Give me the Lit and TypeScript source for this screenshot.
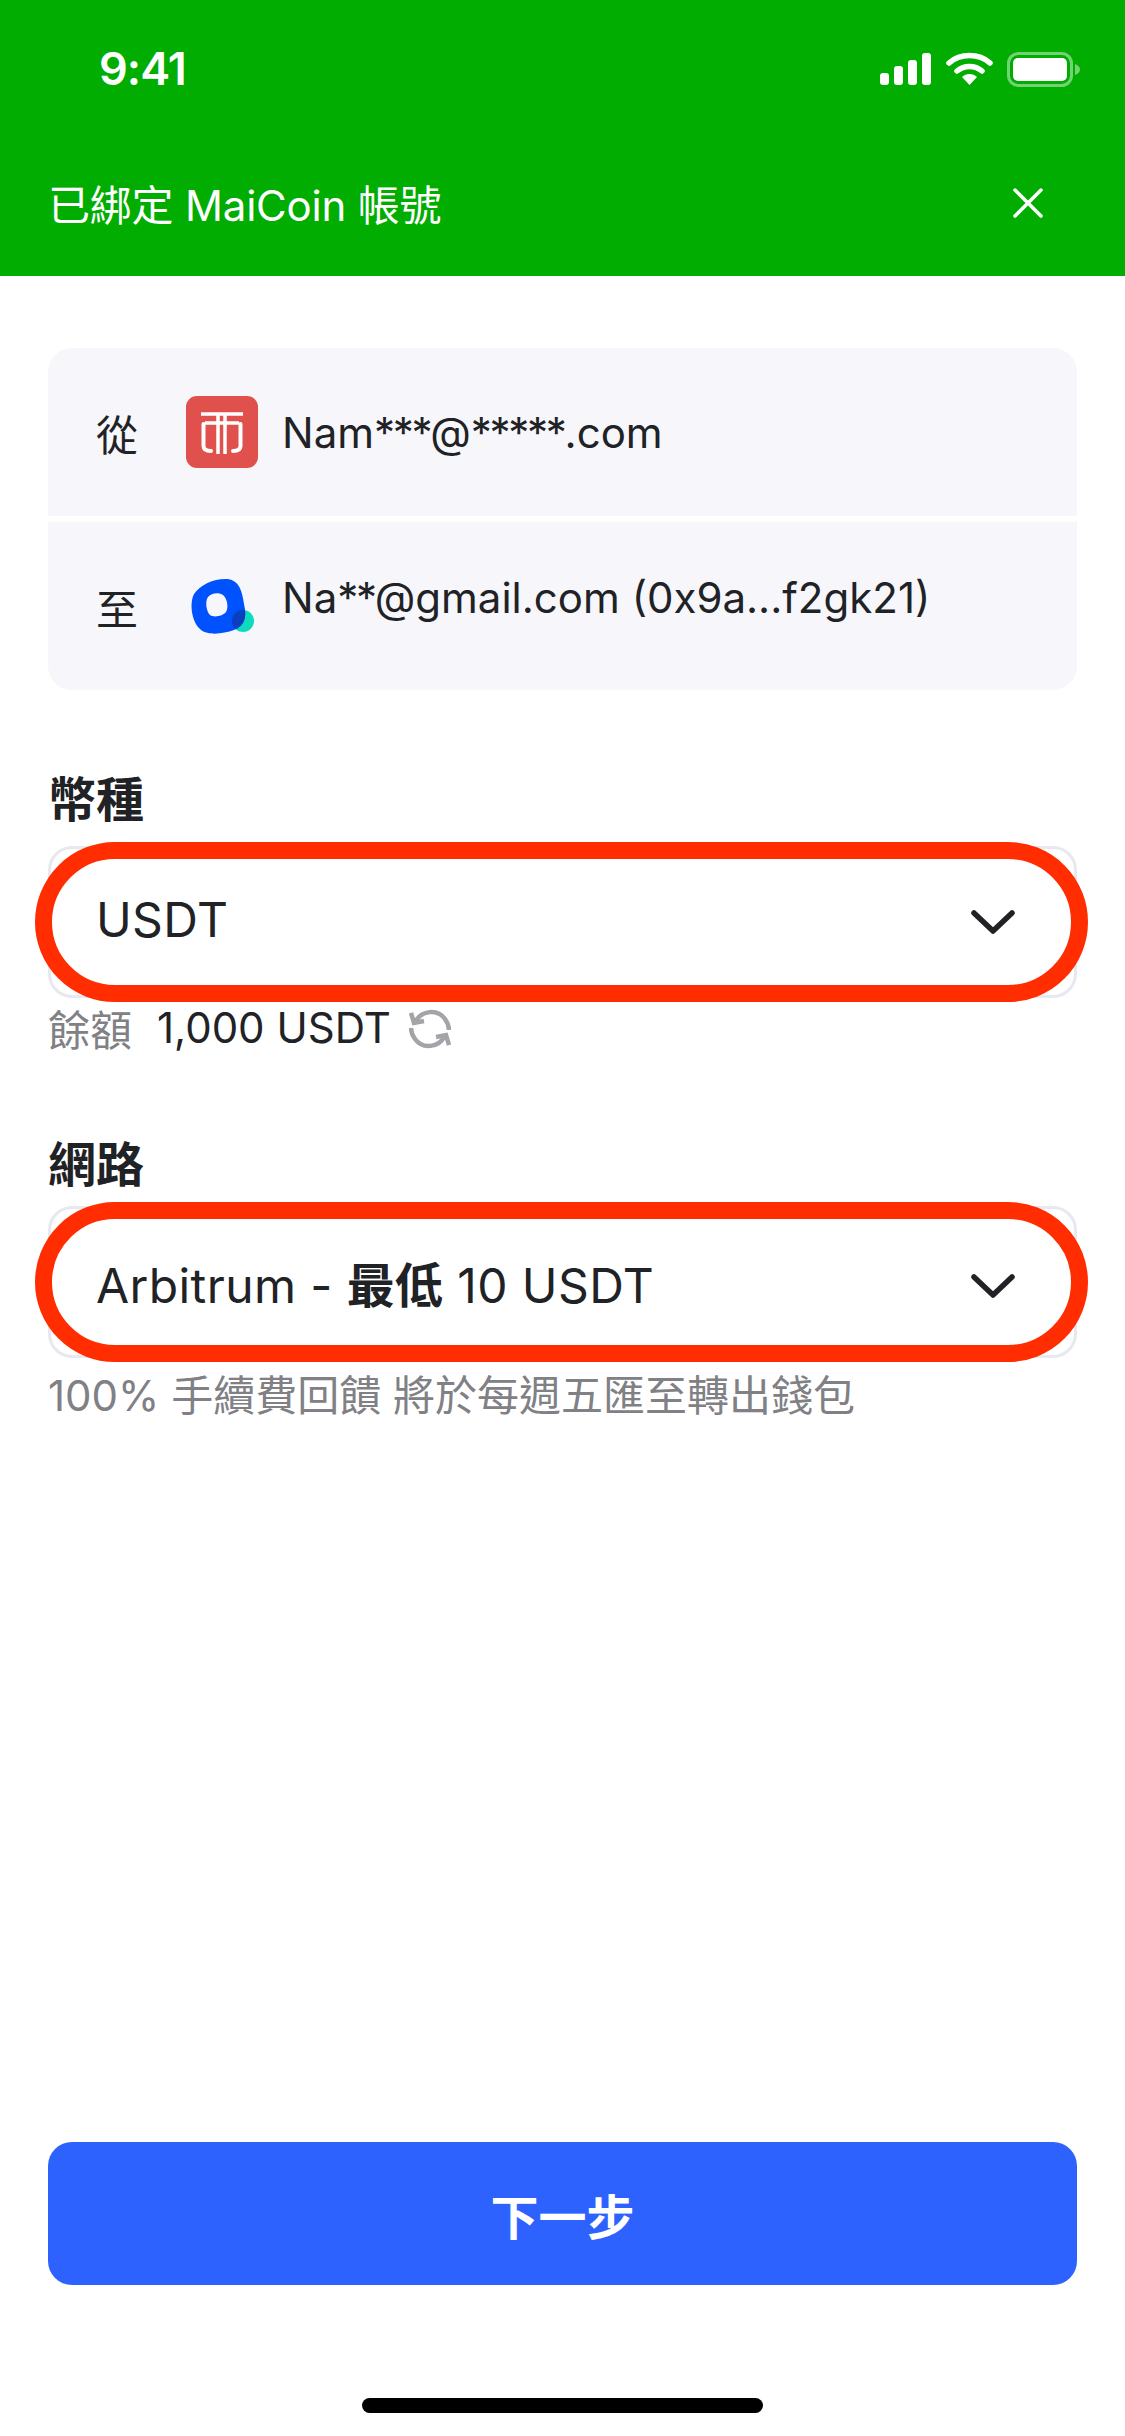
import { css, html, LitElement } from "lit";
import { customElement } from "lit/decorators.js";

const chevron = html`<svg class="chevron" width="46" height="28" viewBox="0 0 46 28">
    <path d="M4 5 L23 23 L42 5" fill="none" stroke="#212226" stroke-width="5.5" stroke-linecap="round" stroke-linejoin="round"></path>
</svg>`;

const BLOB =
    "M7 18 C14 8 28 2 41 3 C52 5 55 14 57 28 C60 40 58 50 47 54 C36 58 20 60 13 53 C5 46 2 28 7 18 Z";

@customElement("app-root")
export class AppRoot extends LitElement {
    static override styles = css`
        :host {
            display: flex;
            flex-direction: column;
            width: 1125px;
            height: 2436px;
            background: #fff;
            color: #212226;
            font-family: Inter, "Noto Sans CJK TC", sans-serif;
        }

        .top {
            height: 276px;
            box-sizing: border-box;
            background: #00ad00;
            color: #fff;
            flex-shrink: 0;
        }

        .status {
            height: 136px;
            display: flex;
            justify-content: space-between;
            align-items: flex-start;
            padding: 52px 44px 0 99px;
            box-sizing: border-box;
        }

        .time {
            font-size: 45px;
            line-height: 34px;
            font-weight: 600;
            letter-spacing: -1px;
        }

        .status-icons {
            display: flex;
            gap: 14px;
        }

        .banner {
            display: flex;
            justify-content: space-between;
            align-items: center;
            padding: 0 81px 0 48px;
            height: 132px;
        }

        .banner span {
            font-size: 42px;
            letter-spacing: -0.2px;
        }

        .banner svg {
            margin-top: 2px;
        }

        .content {
            flex: 1;
            display: flex;
            flex-direction: column;
            padding: 72px 48px 0;
        }

        .card {
            display: grid;
            gap: 6px;
            border-radius: 24px;
            overflow: hidden;
        }

        .row {
            height: 168px;
            background: #f7f7fb;
            display: flex;
            align-items: center;
            padding-left: 48px;
        }

        .row .who {
            width: 42px;
            font-size: 42px;
            margin-right: 48px;
        }

        .row .logo {
            width: 72px;
            height: 72px;
            margin-right: 24px;
            flex-shrink: 0;
        }

        .row .addr {
            font-size: 42px;
            color: #212226;
        }

        .row .raised {
            margin-bottom: 18px;
        }

        .mask {
            letter-spacing: -2.3px;
        }

        .label {
            font-size: 48px;
            font-weight: 700;
            line-height: 56px;
            margin-top: 82px;
            margin-bottom: 18px;
        }

        .label.second {
            margin-top: 0;
            margin-bottom: 13px;
        }

        .select {
            position: relative;
            height: 152px;
            border: 3px solid #e8e8f0;
            border-radius: 24px;
            box-sizing: border-box;
            display: flex;
            justify-content: space-between;
            align-items: center;
            padding: 0 58px 0 45px;
            font-size: 48px;
            letter-spacing: 0.4px;
        }

        .select b {
            font-weight: 700;
        }

        .ring {
            position: absolute;
            left: -16px;
            top: -7px;
            width: 1053px;
            height: 160px;
            box-sizing: border-box;
            border: 17px solid #ff2d00;
            border-radius: 80px;
            background: #fff;
        }

        .select .value,
        .select .chevron {
            position: relative;
        }

        .select.coin .value {
            margin-bottom: 5px;
        }

        .select.network .chevron {
            margin-top: 7px;
        }

        .hint {
            display: flex;
            align-items: center;
            height: 62px;
            font-size: 42px;
            color: #808085;
        }

        .hint .text {
            margin-bottom: 3px;
        }

        .hint .num {
            color: #212226;
            margin-left: 25px;
            margin-bottom: 3px;
        }

        .hint svg {
            margin-left: 18px;
        }

        .balance {
            margin-bottom: 77px;
        }

        .note {
            margin-top: 3px;
        }

        .spacer {
            flex: 1;
        }

        .next {
            height: 143px;
            background: #2e62ff;
            color: #fff;
            border: 0;
            border-radius: 24px;
            font: inherit;
            font-size: 48px;
            font-weight: 700;
        }

        .home {
            display: flex;
            justify-content: center;
            padding: 113px 0 23px;
        }

        .home div {
            width: 401px;
            height: 15px;
            border-radius: 8px;
            background: #000;
        }
    `;

    override render() {
        return html`
            <section class="top">
                <div class="status">
                    <div class="time">9:41</div>
                    <div class="status-icons">
                        <svg width="52" height="34" viewBox="0 0 52 34" fill="#fff">
                            <rect x="0" y="21" width="9" height="12" rx="3"></rect>
                            <rect x="14" y="14" width="9" height="19" rx="3"></rect>
                            <rect x="28" y="8" width="9" height="25" rx="3"></rect>
                            <rect x="42" y="1" width="9" height="32" rx="3"></rect>
                        </svg>
                        <svg width="47" height="34" viewBox="0 0 47 34">
                            <path d="M3 11 C14 1 33 1 44 11" fill="none" stroke="#fff" stroke-width="5.5" stroke-linecap="round"></path>
                            <path d="M11 19 C18 13 29 13 36 19" fill="none" stroke="#fff" stroke-width="5.5" stroke-linecap="round"></path>
                            <path d="M16 25 C20 21 27 21 31 25 L23.5 33 Z" fill="#fff"></path>
                        </svg>
                        <svg width="74" height="35" viewBox="0 0 74 35">
                            <rect x="1.5" y="1.5" width="63" height="32" rx="10" fill="none" stroke="#fff" stroke-opacity="0.45" stroke-width="3"></rect>
                            <rect x="6" y="6" width="54" height="23" rx="5" fill="#fff"></rect>
                            <path d="M68 12 C71 13 73 15 73 17.5 C73 20 71 22 68 23 Z" fill="#fff" fill-opacity="0.45"></path>
                        </svg>
                    </div>
                </div>
                <div class="banner">
                    <span>已綁定 MaiCoin 帳號</span>
                    <svg width="32" height="32" viewBox="0 0 32 32">
                        <path d="M3 3 L29 29 M29 3 L3 29" stroke="#fff" stroke-width="3.5" stroke-linecap="round"></path>
                    </svg>
                </div>
            </section>

            <main class="content">
                <div class="card">
                    <div class="row">
                        <span class="who">從</span>
                        <svg class="logo" viewBox="0 0 72 72">
                            <rect width="72" height="72" rx="11" fill="#e0504c"></rect>
                            <path d="M15 18 H57 M19 27 H53 M32 18 V58 M39 18 V58" fill="none" stroke="#fff" stroke-width="3.5"></path>
                            <path d="M17.5 28 V50 Q17.5 55 25 55 M54.5 28 V50 Q54.5 55 47 55" fill="none" stroke="#fff" stroke-width="4" stroke-linecap="round"></path>
                        </svg>
                        <span class="addr">Nam<span class="mask">***</span>@<span class="mask">*****</span>.com</span>
                    </div>
                    <div class="row">
                        <span class="who">至</span>
                        <svg class="logo" viewBox="0 0 72 72">
                            <defs>
                                <clipPath id="blob"><path d=${BLOB}></path></clipPath>
                            </defs>
                            <g transform="translate(1 6)">
                                <circle cx="56" cy="45" r="11" fill="#0ddbbe"></circle>
                                <path fill-rule="evenodd" fill="#0052ff" d="${BLOB} M21 21 C18 25 19 35 23 39 C27 42 36 40 39 36 C42 31 40 22 36 19 C32 16 24 17 21 21 Z"></path>
                                <circle cx="56" cy="45" r="11" fill="#0a3fc0" clip-path="url(#blob)"></circle>
                            </g>
                        </svg>
                        <span class="addr raised">Na<span class="mask">**</span>@gmail.com (0x9a...f2gk21)</span>
                    </div>
                </div>

                <div class="label">幣種</div>
                <div class="select coin">
                    <div class="ring"></div>
                    <span class="value">USDT</span>
                    ${chevron}
                </div>
                <div class="hint balance">
                    <span class="text">餘額</span>
                    <span class="num">1,000 USDT</span>
                    <svg width="42" height="42" viewBox="0 0 42 42" fill="none" stroke="#a3a3a8" stroke-width="4.5">
                        <path d="M7 13 C12 3 28 0 36 11 C39 15 40 19 40 22"></path>
                        <path d="M2 5 L5 15 L15 13"></path>
                        <path d="M35 29 C30 39 14 42 6 31 C3 27 2 23 2 20"></path>
                        <path d="M40 37 L37 27 L27 29"></path>
                    </svg>
                </div>

                <div class="label second">網路</div>
                <div class="select network">
                    <div class="ring"></div>
                    <span class="value">Arbitrum - <b>最低</b> 10 USDT</span>
                    ${chevron}
                </div>
                <div class="hint note">100% 手續費回饋 將於每週五匯至轉出錢包</div>

                <div class="spacer"></div>
                <button class="next">下一步</button>
                <div class="home"><div></div></div>
            </main>
        `;
    }
}
